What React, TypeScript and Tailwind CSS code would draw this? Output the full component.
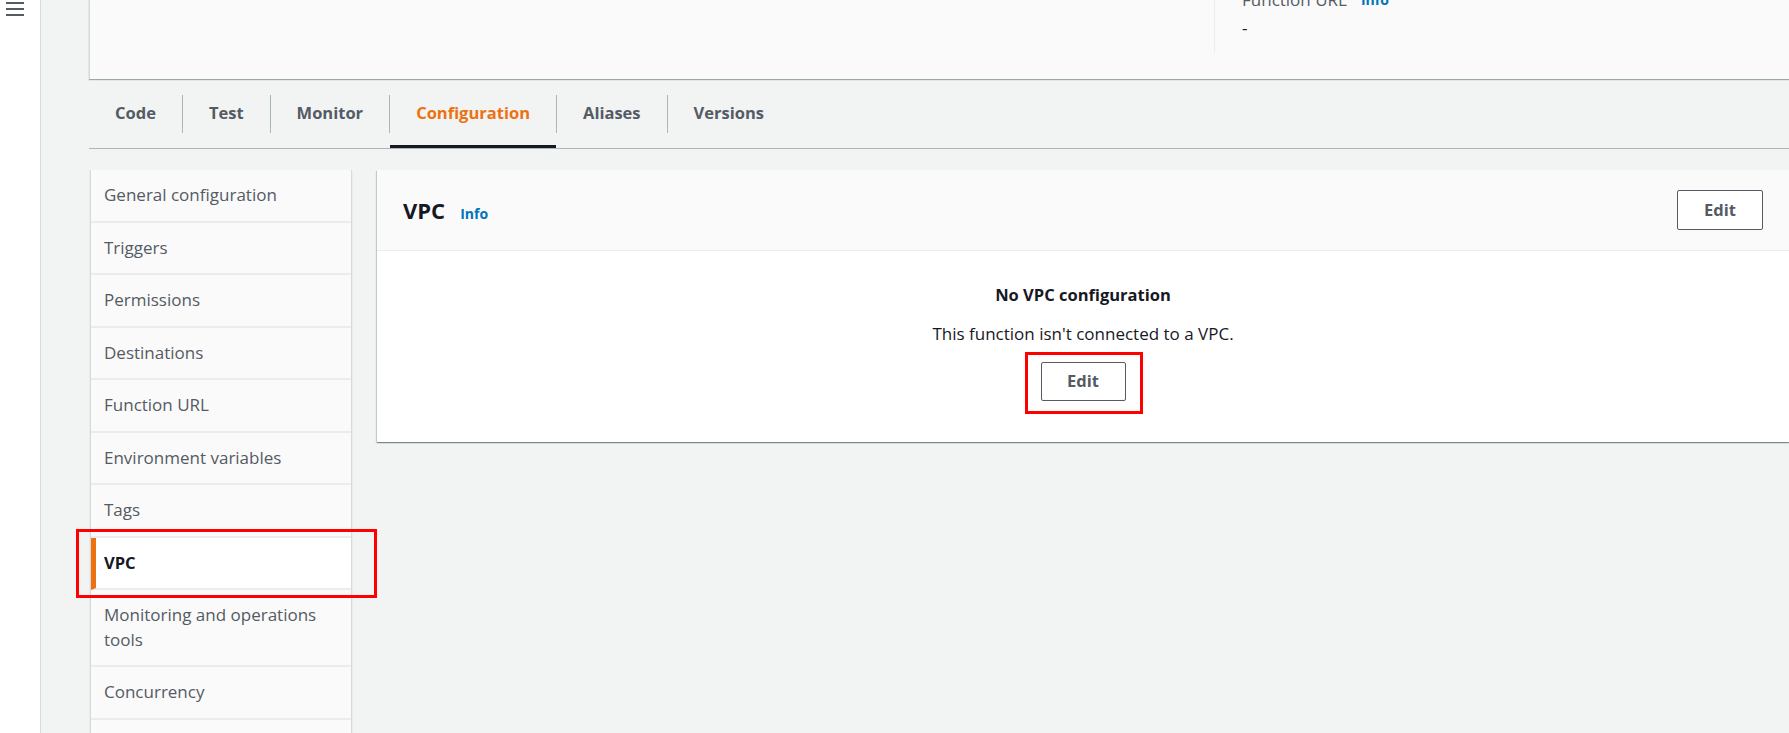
import { useState } from 'react';

const sections = [
  'General configuration',
  'Triggers',
  'Permissions',
  'Destinations',
  'Function URL',
  'Environment variables',
  'Tags',
  'VPC',
  'Monitoring and operations tools',
  'Concurrency',
  'Asynchronous invocation',
];

const tabs = ['Code', 'Test', 'Monitor', 'Configuration', 'Aliases', 'Versions'];

function EditButton() {
  return (
    <button className="h-[40px] w-[86px] rounded-[2px] border border-[#545b64] bg-white text-[16.5px] font-bold text-[#545b64]">
      Edit
    </button>
  );
}

export default function App() {
  const [activeTab] = useState('Configuration');
  const [activeSection] = useState('VPC');

  return (
    <div
      className="flex h-[733px] w-full overflow-hidden bg-[#f2f3f3] text-[#16191f]"
      style={{ fontFamily: '"Open Sans", "Noto Sans", sans-serif' }}
    >
      {/* collapsed side nav */}
      <div className="w-[41px] shrink-0 border-r border-[#d5dbdb] bg-white">
        <div className="ml-[6px] mt-[2px] flex w-[18px] flex-col gap-[4px]">
          <span className="h-[2px] bg-[#545b64]" />
          <span className="h-[2px] bg-[#545b64]" />
          <span className="h-[2px] bg-[#545b64]" />
        </div>
      </div>

      <div className="flex min-w-0 flex-1 flex-col pl-[48px]">
        {/* function overview card (scrolled off the top) */}
        <div className="flex h-[79px] shrink-0 overflow-hidden border-l border-[#d5dbdb] bg-[#fafafa] shadow-[0_1px_1px_0_rgba(0,28,36,0.35)]">
          <div className="flex-1" />
          <div className="flex h-[53px] w-[575px] flex-col border-l border-[#eaeded] pl-[27px]">
            <div className="-mt-[12px] flex items-center gap-[14px] text-[17px] leading-6">
              <span className="text-[#545b64]">Function URL</span>
              <span className="text-[14px] font-bold text-[#0073bb]">Info</span>
            </div>
            <div className="mt-[4px] text-[17px] leading-6">-</div>
          </div>
        </div>

        {/* tabs */}
        <div className="flex h-[70px] shrink-0 items-stretch border-b border-[#aab7b8]">
          {tabs.map((t, i) => (
            <div key={t} className="flex items-center">
              {i > 0 && <span className="h-[38px] w-px bg-[#aab7b8]" />}
              <div
                className={
                  t === activeTab
                    ? 'flex h-full items-center border-b-[3px] border-[#16191f] px-[26px] pt-[3px] text-[16.5px] font-bold text-[#ec7211]'
                    : 'flex h-full items-center border-b-[3px] border-transparent px-[26px] pt-[3px] text-[16.5px] font-bold text-[#545b64]'
                }
              >
                {t}
              </div>
            </div>
          ))}
        </div>

        <div className="mt-[21px] flex flex-1 items-start gap-[25px]">
          {/* configuration sections */}
          <div className="ml-px w-[262px] shrink-0 border-x border-[#d5dbdb] bg-[#fafafa] shadow-[0_1px_1px_0_rgba(0,28,36,0.2)]">
            {sections.map((s) => {
              const active = s === activeSection;
              return (
                <div key={s} className="relative">
                  <div
                    className={
                      active
                        ? 'border-b-2 border-l-[5px] border-[#eaeded] border-l-[#ec7211] bg-white py-[13px] pl-[8px] pr-4 text-[16.5px] font-bold leading-[24.5px] text-[#16191f]'
                        : 'border-b-2 border-[#eaeded] py-[13px] pl-[13px] pr-4 text-[17px] leading-[24.5px] text-[#545b64]'
                    }
                  >
                    {s}
                  </div>
                  {active && (
                    <div className="pointer-events-none absolute -left-[15px] -top-[9px] h-[69px] w-[301px] border-[3px] border-[#ff0000]" />
                  )}
                </div>
              );
            })}
          </div>

          {/* VPC panel */}
          <div className="flex-1 bg-white shadow-[0_1px_1px_0_rgba(0,28,36,0.3),1px_1px_1px_0_rgba(0,28,36,0.15),-1px_1px_1px_0_rgba(0,28,36,0.15)]">
            <div className="flex h-[81px] items-center justify-between border-b border-[#eaeded] bg-[#fafafa] pl-[26px] pr-[26px]">
              <div className="flex items-baseline gap-[15px]">
                <h2 className="text-[22px] font-bold leading-7">VPC</h2>
                <span className="text-[14px] font-bold text-[#0073bb]">Info</span>
              </div>
              <EditButton />
            </div>
            <div className="flex flex-col items-center pb-[41px] pt-[32px]">
              <div className="text-[16.5px] font-bold leading-6">No VPC configuration</div>
              <p className="mt-[15px] text-[17px] leading-6">This function isn't connected to a VPC.</p>
              <div className="relative mt-[16px]">
                <button className="h-[39px] w-[85px] rounded-[2px] border border-[#545b64] bg-white text-[16.5px] font-bold text-[#545b64]">
                  Edit
                </button>
                <div className="pointer-events-none absolute -left-[16px] -top-[10px] h-[62px] w-[118px] border-[3px] border-[#ff0000]" />
              </div>
            </div>
          </div>
        </div>
      </div>
    </div>
  );
}
